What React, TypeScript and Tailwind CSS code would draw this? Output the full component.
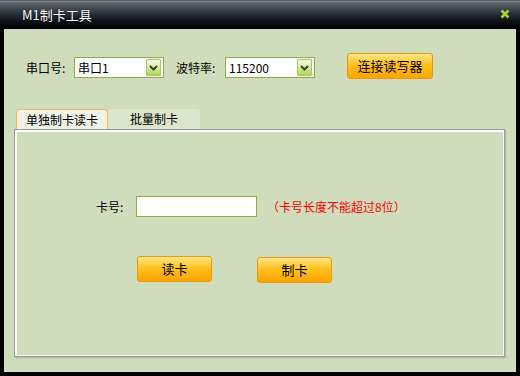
import React, { useState } from "react";

const font = "font-['Noto_Sans_CJK_SC','Noto_Sans',sans-serif]";

const Select = ({ value }: { value: string }) => (
  <div className="flex h-[21px] w-[90px] items-center border border-[#8cae3c] bg-white pl-[3px] pr-[2px]">
    <span className="flex-1 text-[12px] leading-[19px] text-black">{value}</span>
    <span className="flex h-[17px] w-[15px] items-center justify-center rounded-[1px] border border-[#a6c46a] bg-[linear-gradient(to_bottom,#f4fadc,#d2ec96_55%,#a8d84c)]">
      <svg width="9" height="6" viewBox="0 0 9 6">
        <path d="M1 1 L4.5 4.5 L8 1" fill="none" stroke="#3c4030" strokeWidth="2" />
      </svg>
    </span>
  </div>
);

const OrangeButton = ({ label, w }: { label: string; w: string }) => (
  <button
    className={`${w} h-[26px] rounded-[3px] border border-[#e59a10] bg-[linear-gradient(to_bottom,#ffe68a,#ffc21e_45%,#ffa300)] text-[13px] leading-[24px] text-black`}
  >
    {label}
  </button>
);

export default function App() {
  const [tab, setTab] = useState(0);
  const [cardNo, setCardNo] = useState("");

  return (
    <div className={`flex h-[376px] w-[520px] flex-col bg-black ${font}`}>
      {/* title bar */}
      <div className="flex h-[29px] items-center bg-[linear-gradient(to_bottom,#30343a_0px,#858b91_1px,#5e646a_3px,#2c323a_13px,#0e1218_21px,#000_28px)] pl-[22px] pr-[10px]">
        <span className="flex-1 text-[13px] text-white [text-shadow:0_0_1px_#000]">M1制卡工具</span>
        <svg width="10" height="10" viewBox="0 0 10 10" className="mb-[1px]">
          <path d="M1.5 1.5 L8.5 8.5 M8.5 1.5 L1.5 8.5" stroke="#a4d23e" strokeWidth="2.6" />
        </svg>
      </div>

      {/* body */}
      <div className="mx-[4px] mb-[4px] flex flex-1 flex-col bg-[#d0ddbd]">
        <div className="flex items-start pl-[22px] pt-[23px]">
          <span className="mt-[5px] w-[48px] text-[12px] leading-[21px] text-black">串口号:</span>
          <div className="mt-[5px]">
            <Select value="串口1" />
          </div>
          <span className="ml-[12px] mt-[5px] w-[49px] text-[12px] leading-[21px] text-black">波特率:</span>
          <div className="mt-[5px]">
            <Select value="115200" />
          </div>
          <div className="ml-[32px]">
            <OrangeButton label="连接读写器" w="w-[86px]" />
          </div>
        </div>

        {/* tabs */}
        <div className="mt-[30px] flex pl-[12px]">
          <button
            onClick={() => setTab(0)}
            className={`h-[20px] w-[92px] rounded-t-[4px] text-[12px] leading-[18px] text-black ${
              tab === 0
                ? "border border-b-0 border-[#f2b85a] bg-[#eff3e6]"
                : "bg-[#dce6cd]"
            }`}
          >
            单独制卡读卡
          </button>
          <button
            onClick={() => setTab(1)}
            className={`h-[20px] w-[92px] rounded-t-[4px] text-[12px] leading-[18px] text-black ${
              tab === 1
                ? "border border-b-0 border-[#f2b85a] bg-[#eff3e6]"
                : "bg-[#dce6cd]"
            }`}
          >
            批量制卡
          </button>
        </div>

        {/* panel */}
        <div className="ml-[10px] h-[228px] w-[491px] border border-[#999c96] shadow-[1px_1px_0_#b4bca6,2px_2px_0_#c8d2b6]">
          <div className="flex h-full flex-col border-2 border-white border-b-[1px] border-r-[1px]">
            <div className="flex items-center pl-[79px] pt-[64px]">
              <span className="w-[40px] text-[12px] text-black">卡号:</span>
              <input
                value={cardNo}
                onChange={(e) => setCardNo(e.target.value)}
                className="h-[21px] w-[121px] border border-[#8cae3c] bg-white px-[2px] text-[12px] outline-none"
              />
              <span className="ml-[10px] text-[12px] text-[#ff0000]">（卡号长度不能超过8位）</span>
            </div>
            <div className="mt-[39px] flex pl-[120px]">
              <OrangeButton label="读卡" w="w-[75px]" />
              <div className="ml-[45px]">
                <OrangeButton label="制卡" w="w-[75px]" />
              </div>
            </div>
          </div>
        </div>
      </div>
    </div>
  );
}
